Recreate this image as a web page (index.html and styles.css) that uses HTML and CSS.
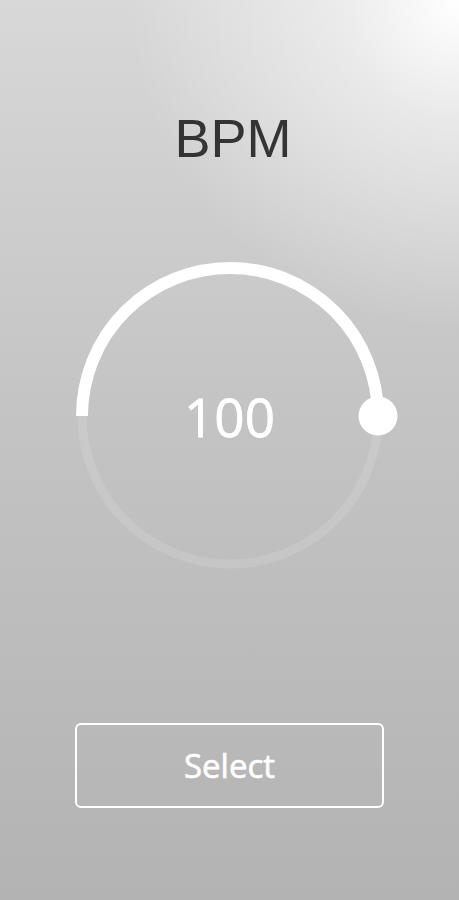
FILE: index.html
```html
<!DOCTYPE html>
<html lang="en">
<head>
    <meta charset="UTF-8">
    <meta name="viewport" content="width=device-width, initial-scale=1.0">
    <title>BPM</title>
    <link rel="stylesheet" href="styles.css">
</head>
<body>
    <div class="screen">
        <h1 class="title">BPM</h1>

        <div class="dial">
            <svg class="dial-svg" width="340" height="340" viewBox="0 0 340 340">
                <circle class="track" cx="170" cy="170" r="148"></circle>
                <path class="arc" d="M 22 170 A 148 148 0 0 1 318 170"></path>
                <circle class="knob" cx="318" cy="170" r="19.5"></circle>
            </svg>
            <div class="value">100</div>
        </div>

        <button class="select-btn">Select</button>
    </div>
</body>
</html>
```

FILE: styles.css
```css
html, body {
    margin: 0;
    padding: 0;
}

body {
    width: 459px;
    height: 900px;
    overflow: hidden;
    background:
        radial-gradient(circle at 100% 0%, rgba(255, 255, 255, 1) 0px, rgba(255, 255, 255, 0.5) 120px, rgba(255, 255, 255, 0) 330px),
        linear-gradient(to bottom, #d8d8d8 0%, #c4c4c4 45%, #b3b3b3 100%);
}

.screen {
    display: flex;
    flex-direction: column;
    align-items: center;
    padding-top: 111px;
}

.title {
    margin: 0 0 0 7px;
    font-family: "Liberation Sans", Arial, sans-serif;
    font-size: 54px;
    line-height: 54px;
    font-weight: normal;
    color: #343434;
}

.dial {
    position: relative;
    width: 340px;
    height: 340px;
    margin-top: 81px;
}

.dial-svg {
    display: block;
}

.track {
    fill: none;
    stroke: rgba(255, 255, 255, 0.12);
    stroke-width: 9;
}

.arc {
    fill: none;
    stroke: #fff;
    stroke-width: 12;
}

.knob {
    fill: #fff;
}

.value {
    position: absolute;
    inset: 0;
    display: flex;
    align-items: center;
    justify-content: center;
    font-family: "Open Sans", sans-serif;
    font-size: 53px;
    line-height: 1;
    color: #fff;
    -webkit-text-stroke: 0.8px #fff;
}

.select-btn {
    width: 309px;
    height: 85px;
    margin-top: 137px;
    background: transparent;
    border: 2.5px solid #fff;
    border-radius: 6px;
    font-family: "Open Sans", sans-serif;
    font-size: 33px;
    color: #fff;
    -webkit-text-stroke: 0.6px #fff;
    cursor: pointer;
}
```
